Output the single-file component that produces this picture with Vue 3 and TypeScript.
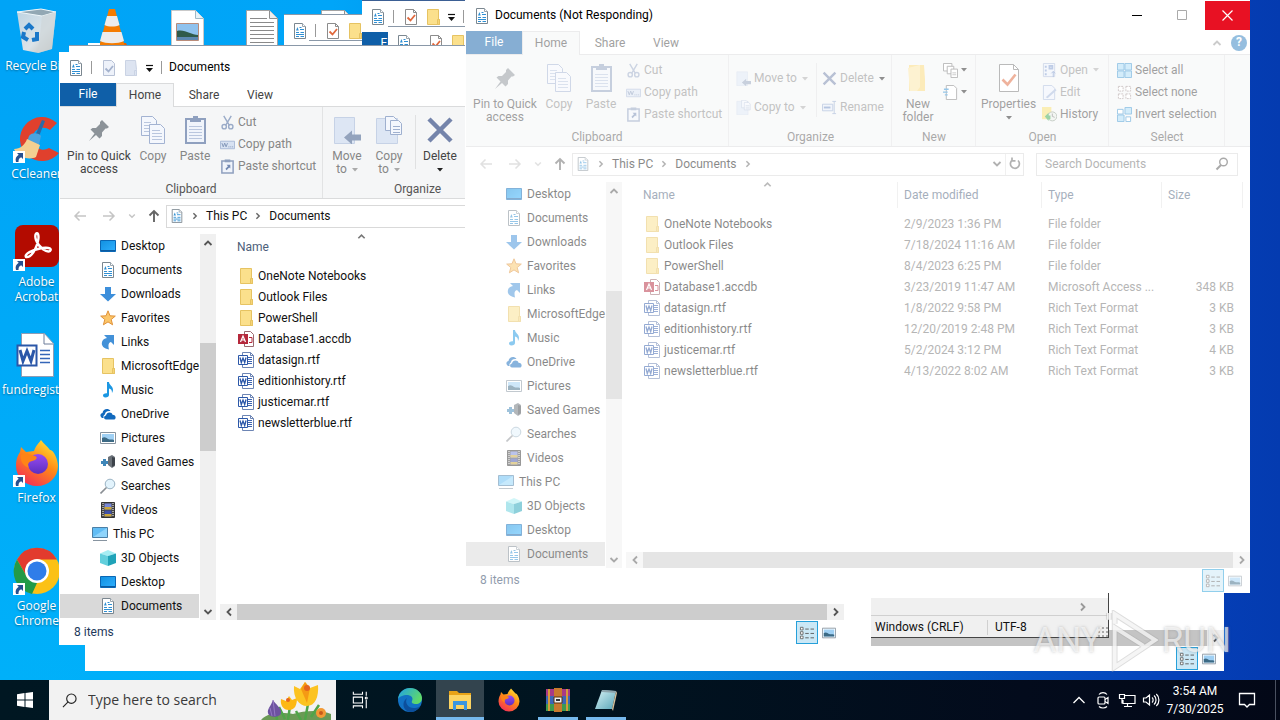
<script setup lang="ts">
interface TreeItem { label: string; icon: string; root?: boolean; selected?: boolean }
interface FileItem { name: string; icon: string; date: string; type: string; size: string }
interface ExplorerWindow { id: string; frozen: boolean }

const windows: ExplorerWindow[] = [
  { id: 'active', frozen: false },
  { id: 'frozen', frozen: true },
]

const backWindows: string[] = ['one', 'stub', 'two', 'three', 'blank']

const tree: TreeItem[] = [
  { label: 'Desktop', icon: 'desktop' },
  { label: 'Documents', icon: 'doc' },
  { label: 'Downloads', icon: 'down' },
  { label: 'Favorites', icon: 'star' },
  { label: 'Links', icon: 'link' },
  { label: 'MicrosoftEdge', icon: 'folder' },
  { label: 'Music', icon: 'music' },
  { label: 'OneDrive', icon: 'cloud' },
  { label: 'Pictures', icon: 'picture' },
  { label: 'Saved Games', icon: 'games' },
  { label: 'Searches', icon: 'lens' },
  { label: 'Videos', icon: 'video' },
  { label: 'This PC', icon: 'pc', root: true },
  { label: '3D Objects', icon: 'cube' },
  { label: 'Desktop', icon: 'desktop' },
  { label: 'Documents', icon: 'doc', selected: true },
]

const files: FileItem[] = [
  { name: 'OneNote Notebooks', icon: 'folder', date: '2/9/2023 1:36 PM', type: 'File folder', size: '' },
  { name: 'Outlook Files', icon: 'folder', date: '7/18/2024 11:16 AM', type: 'File folder', size: '' },
  { name: 'PowerShell', icon: 'folder', date: '8/4/2023 6:25 PM', type: 'File folder', size: '' },
  { name: 'Database1.accdb', icon: 'access', date: '3/23/2019 11:47 AM', type: 'Microsoft Access ...', size: '348 KB' },
  { name: 'datasign.rtf', icon: 'rtf', date: '1/8/2022 9:58 PM', type: 'Rich Text Format', size: '3 KB' },
  { name: 'editionhistory.rtf', icon: 'rtf', date: '12/20/2019 2:48 PM', type: 'Rich Text Format', size: '3 KB' },
  { name: 'justicemar.rtf', icon: 'rtf', date: '5/2/2024 3:12 PM', type: 'Rich Text Format', size: '4 KB' },
  { name: 'newsletterblue.rtf', icon: 'rtf', date: '4/13/2022 8:02 AM', type: 'Rich Text Format', size: '3 KB' },
]

const shortcuts = [
  { label: 'Recycle Bin', icon: 'bin', arrow: false },
  { label: 'CCleaner', icon: 'ccleaner', arrow: true },
  { label: 'Adobe Acrobat', icon: 'acrobat', arrow: true },
  { label: 'fundregister', icon: 'word', arrow: false },
  { label: 'Firefox', icon: 'firefox', arrow: true },
  { label: 'Google Chrome', icon: 'chrome', arrow: true },
]

const topRow = [
  { icon: 'vlc', label: 'VLC', arrow: true },
  { icon: 'imagefile', label: 'Image', arrow: false },
  { icon: 'textfile', label: 'Text', arrow: false },
  { icon: 'textfile', label: 'Text', arrow: false },
]

const tasks = [
  { icon: 'taskview', label: 'Task View', state: '' },
  { icon: 'edge', label: 'Microsoft Edge', state: '' },
  { icon: 'explorer', label: 'File Explorer', state: 'current' },
  { icon: 'firefox', label: 'Firefox', state: '' },
  { icon: 'winrar', label: 'WinRAR', state: 'running' },
  { icon: 'notepad', label: 'Notepad', state: 'running' },
]
</script>

<template>
  <div class="desktop">
    <svg class="defs" aria-hidden="true">
      <defs>
        <linearGradient id="g-fx" x1="0.8" y1="0" x2="0.2" y2="1"><stop offset="0" stop-color="#ffe437" /><stop offset=".45" stop-color="#ff8a16" /><stop offset="1" stop-color="#f2295b" /></linearGradient>
        <linearGradient id="g-fp" x1="0" y1="0" x2="0" y2="1"><stop offset="0" stop-color="#9a4bf2" /><stop offset="1" stop-color="#5b2fc0" /></linearGradient>
        <linearGradient id="g-desk" x1="0" y1="0" x2="1" y2="1"><stop offset="0" stop-color="#1190e0" /><stop offset="1" stop-color="#2fb0ff" /></linearGradient>
        <linearGradient id="g-edge" x1="0" y1="0" x2="1" y2="0.5"><stop offset="0" stop-color="#1fa2e8" /><stop offset="1" stop-color="#5fd96a" /></linearGradient>
        <linearGradient id="g-bin" x1="0" y1="0" x2="1" y2="1"><stop offset="0" stop-color="#bcd3e2" /><stop offset=".6" stop-color="#dbe3e8" /><stop offset="1" stop-color="#b7b4ae" /></linearGradient>
        <linearGradient id="g-note" x1="0" y1="0" x2="1" y2="1"><stop offset="0" stop-color="#d8f3f6" /><stop offset="1" stop-color="#5aa6b8" /></linearGradient>
      </defs>
      <symbol id="i-doc" viewBox="0 0 16 16"><path d="M2.500.5h8l3 3v12h-11z" fill="#fff" stroke="#7b8790" /><path d="M10.500.5v3h3" fill="#fff" stroke="#9aa5ad" /><path d="M7.500 4.500h2M8 6.500h4M4 9.500h3M8.500 9.500h3.500M4 11.500h8M4 13.500h3M8.500 13.500h3.500" stroke="#2f8fd3" /><path d="M4 7.500l1.500-3.500 1.200 3.500z" fill="#2f8fd3" /></symbol>
      <symbol id="i-check" viewBox="0 0 16 16"><path d="M2.500.5h8l3 3v12h-11z" fill="#fff" stroke="#8c8c8c" /><path d="M10.500.5v3h3" fill="none" stroke="#8c8c8c" /><path d="M4.500 8.500l3 3 4.500-5.500" fill="none" stroke="#e0683c" stroke-width="1.800" /></symbol>
      <symbol id="i-checkoff" viewBox="0 0 16 16"><path d="M2.500.5h8l3 3v12h-11z" fill="#eef2fa" stroke="#b8c2d6" /><path d="M4.500 8.500l3 3 4.500-5.500" fill="none" stroke="#a4b2cd" stroke-width="1.800" /></symbol>
      <symbol id="i-folder" viewBox="0 0 16 16"><path d="M2.500.5h11v10h1v5h-12z" fill="#fbe08c" stroke="#e6c362" /><path d="M12.500 10.500h2v5h-2z" fill="#f6d477" stroke="#e6c362" /></symbol>
      <symbol id="i-folderoff" viewBox="0 0 16 16"><path d="M2.500.5h10l1 9v6h-11z" fill="#dde4f1" stroke="#cad3e4" /><path d="M11.500 10.500h2v5h-2z" fill="#dde4f1" stroke="#cad3e4" /></symbol>
      <symbol id="i-desktop" viewBox="0 0 16 16"><path d="M.5 2.500h15v11H.5z" fill="url(#g-desk)" stroke="#0a67b5" /><path d="M1 12h14v1H1z" fill="#0d5a9e" /></symbol>
      <symbol id="i-down" viewBox="0 0 16 16"><path d="M5 1h6v7h5l-8 7.500L0 8h5z" fill="#3d8fdb" /></symbol>
      <symbol id="i-star" viewBox="0 0 16 16"><path d="M8 .8l2 5 5.300.3-4.100 3.400 1.400 5.300L8 11.900l-4.600 2.900 1.400-5.300L.7 6.100 6 5.800z" fill="#fbc66a" stroke="#e0923a" /></symbol>
      <symbol id="i-link" viewBox="0 0 16 16"><path d="M4 1h10v10l-3-3C8.500 8.500 8 11 9 15.500 4 14.500 1 12 2 8c.5-2.500 2.500-3.500 5-4z" fill="#4391d8" /></symbol>
      <symbol id="i-music" viewBox="0 0 16 16"><path d="M7 0h2c0 3 4 4 4 8 0 1-.5 2-1 3 0-3-1-4-3-4.500V13c0 1.500-1.500 2.500-3.500 2.500S3 14.500 3 13.300 4.500 11 7 11.200z" fill="#1c97e2" /></symbol>
      <symbol id="i-cloud" viewBox="0 0 16 16"><path d="M1 11c-1.500-2 0-4 1.500-4C3 3 8 1.500 10.500 5 7 4.500 5 6 5 8.500 3.500 9 3 11 3.800 12H2z" fill="#1269bd" /><path d="M6 13.500c-2.500 0-2.500-4 0-4 .5-4 6-4 6.500-.7 4 0 4 4.700 1 4.700z" fill="#1269bd" /></symbol>
      <symbol id="i-picture" viewBox="0 0 16 16"><path d="M.5 2.500h15v11H.5z" fill="#fff" stroke="#8794a0" /><path d="M2 4h12v8H2z" fill="#9fd0f4" /><path d="M2 8c3-1.500 4 0 6 1s4 0 6 1v2H2z" fill="#3c6a85" /></symbol>
      <symbol id="i-games" viewBox="0 0 16 16"><path d="M8 3l4-2 3 2v9l-3 2-4-3z" fill="#6a7178" /><path d="M12 3l3 1v7l-3 2z" fill="#3d434a" /><path d="M3 5h3v2h2v3H6v2H3v-2H1V7h2z" fill="#3f86b8" /></symbol>
      <symbol id="i-lens" viewBox="0 0 16 16"><circle cx="10" cy="6" r="4.800" fill="#e2f3fc" stroke="#9ab3c4" /><path d="M6.500 9.500l-6 6" stroke="#8a8f94" stroke-width="1.600" /></symbol>
      <symbol id="i-video" viewBox="0 0 16 16"><path d="M1.500.5h13v15h-13z" fill="#444" stroke="#333" /><path d="M4.500 1.500h7v6h-7z" fill="#7888d8" /><path d="M4.500 8.500h7v6h-7z" fill="#3f50a8" /><path d="M4.500 5h7v2.500h-7zM4.500 12h7v2.500h-7z" fill="#c9a638" /><path d="M3 1v14M13 1v14" stroke="#fff" stroke-dasharray="1 1" /></symbol>
      <symbol id="i-pc" viewBox="0 0 16 16"><path d="M.5 1.500h15v10H.5z" fill="#62bdf5" stroke="#4b7fa6" /><path d="M1 11l14-9v9z" fill="#8fd4fb" /><path d="M1 14.500h14" stroke="#8794a0" /></symbol>
      <symbol id="i-cube" viewBox="0 0 16 16"><path d="M0 3.500L8 0l8 3.500L8 6z" fill="#a5eef3" /><path d="M0 3.500L8 6v10l-8-3z" fill="#62cfdc" /><path d="M16 3.500L8 6v10l8-3z" fill="#1fa3b8" /></symbol>
      <symbol id="i-rtf" viewBox="0 0 16 16"><path d="M4.500.5h8l3 3v12h-11z" fill="#fff" stroke="#6d85b4" /><path d="M12.500.5v3h3" fill="none" stroke="#6d85b4" /><path d="M10 5.500h4M10 7.500h4M10 9.500h4M10 11.500h4" stroke="#3c63b0" /><path d="M.5 3.500h9v9h-9z" fill="#fff" stroke="#2b57a8" /><path d="M2 5.500l1.300 5L5 6l1.700 4.500L8 5.500" fill="none" stroke="#2b57a8" stroke-width="1.300" /></symbol>
      <symbol id="i-access" viewBox="0 0 16 16"><path d="M6.500.5h6l3 3v12h-9z" fill="#fff" stroke="#9a6a70" /><path d="M0 3h10v10H0z" fill="#b5283b" /><path d="M2.500 11L5 5l2.500 6M3.500 9h3" fill="none" stroke="#fff" stroke-width="1.200" /><path d="M11 6.500h3v5h-3" fill="none" stroke="#b5283b" /></symbol>
      <symbol id="i-pin" viewBox="0 0 24 24"><path d="M15 2l7 7-2 1.500-1.500 0-3.500 4 0 3.500L12.500 20.500 9 17l-7 6 5.500-7.500L3.500 11.500 5.500 10l3.500 0L13 6l0-2z" fill="#8c9399" /></symbol>
      <symbol id="i-copy" viewBox="0 0 28 28"><g stroke="#a3b3d2" fill="#f4f7fd"><path d="M2.500.5h11l4 4v15h-15z" /><path d="M10.500 8.500h11l4 4v15h-15z" /></g><path d="M5 6.500h7M5 9.500h5M5 12.500h5M5 15.500h5M13 14.500h8M13 17.500h10M13 20.500h10M13 23.500h10" stroke="#b9c6de" /></symbol>
      <symbol id="i-paste" viewBox="0 0 28 28"><path d="M5 3h19v24H5z" fill="#f0f4fb" stroke="#8fa0bf" stroke-width="2" /><path d="M12 0h5v2h3v4H9V2h3z" fill="#8fa0bf" /><path d="M8 10.500h13M8 13.500h13M8 16.500h13M8 19.500h13M8 22.500h13" stroke="#b9c6de" /></symbol>
      <symbol id="i-cut" viewBox="0 0 16 16"><g fill="none" stroke="#9aabc8" stroke-width="1.500"><path d="M4 1l6 10M12 1L6 11" /><circle cx="4.500" cy="12.500" r="2.300" /><circle cx="11.500" cy="12.500" r="2.300" /></g></symbol>
      <symbol id="i-path" viewBox="0 0 16 16"><path d="M.5 4.500h15v8H.5z" fill="#d8e2f2" stroke="#a9b9d6" /><path d="M2 6.500l1.500 4 1.500-4 1.500 4 1.500-4M9 10.500h1M11 10.500h1M13 10.500h1" fill="none" stroke="#8195b8" /></symbol>
      <symbol id="i-pshort" viewBox="0 0 16 16"><path d="M2 2h12v13H2z" fill="#f0f4fb" stroke="#8fa0bf" stroke-width="1.600" /><path d="M5 .5h6v3H5z" fill="#8fa0bf" /><path d="M7 6h4v4L9.800 9 7 12 5.800 10.500 8.500 7.800z" fill="#7389b3" /></symbol>
      <symbol id="i-move" viewBox="0 0 28 28"><path d="M1.500 1.500h20v26h-20z" fill="#dde6f4" stroke="#c6d2e6" /><path d="M11 21.500l8-7v4h9v6h-9v4z" fill="#93a3bd" /></symbol>
      <symbol id="i-copyto" viewBox="0 0 28 28"><path d="M1.500 2.500h21v25h-21z" fill="#dde6f4" stroke="#c6d2e6" /><g fill="#f4f7fd" stroke="#9fb0cf"><path d="M10.500.5h8l3 3v11h-11z" /><path d="M15.500 4.500h8l3 3v11h-11z" /></g><path d="M18 10.500h7M18 13.500h7M18 16.500h7" stroke="#9fb0cf" /></symbol>
      <symbol id="i-x" viewBox="0 0 28 28"><path d="M3 3l22 22M25 3L3 25" stroke="#7484ab" stroke-width="4.500" /></symbol>
      <symbol id="i-rename" viewBox="0 0 16 16"><path d="M.5 4.500h11v7H.5zM13 1.500v13M11 1.500h4M11 14.500h4" fill="#e6edf8" stroke="#8fa5cd" /><path d="M2 8h7" stroke="#6d8cc4" stroke-width="2" /></symbol>
      <symbol id="i-newfolder" viewBox="0 0 28 28"><path d="M5 1h15l1 14v12H5z" fill="#fbd978" /><path d="M4 4l12-3v22l-3 4H6z" fill="#fde7a4" /></symbol>
      <symbol id="i-newitem" viewBox="0 0 16 16"><g fill="#fff" stroke="#777"><path d="M.5.5h9v8h-9z" /><path d="M4.500 3.500h7v8h-7z" /><path d="M8.500 6.500h7v9h-7z" /></g><path d="M10 10.500h4M10 12.500h4" stroke="#999" /></symbol>
      <symbol id="i-easy" viewBox="0 0 16 16"><path d="M3.500.5h8l3 3v12h-11z" fill="#fff" stroke="#777" /><path d="M1 4.500h5M0 7.500h5M2 10.500h3" stroke="#2f8fd3" stroke-width="1.400" /></symbol>
      <symbol id="i-props" viewBox="0 0 28 28"><path d="M4.500.5h14l5 5v22h-19z" fill="#fff" stroke="#777" /><path d="M18.500.5v5h5" fill="none" stroke="#777" /><path d="M7.500 15.500l5 5 8-10" fill="none" stroke="#e0683c" stroke-width="2.600" /></symbol>
      <symbol id="i-open" viewBox="0 0 16 16"><path d="M1.500.5h12v14h-12z" fill="#eaf0fa" stroke="#a9b9d6" /><path d="M4 3v2M4 7v2M4 11v2M8 3h3v3H8z" stroke="#7f9ace" stroke-width="2" fill="none" /><path d="M12 15V9M10 11l2-2 2 2" stroke="#6d8cc4" fill="none" /></symbol>
      <symbol id="i-edit" viewBox="0 0 16 16"><path d="M1.500.5h9l3 3v12h-12z" fill="#eef3fc" stroke="#a3b6da" /><path d="M4 13l10-9 1.500 1.500L6 14z" fill="#a3b6da" /></symbol>
      <symbol id="i-history" viewBox="0 0 16 16"><path d="M0 0h10v13H0z" fill="#f6df6e" /><circle cx="11" cy="10" r="4.800" fill="#e8efe8" stroke="#8b9a8b" /><path d="M11 7v3l2.500 1" fill="none" stroke="#777" /><path d="M3 10l4-4v3h2v4H7v2z" fill="#3aa94d" /></symbol>
      <symbol id="i-selall" viewBox="0 0 16 16"><path d="M.5.5h7v7h-7zM8.500.5h7v7h-7zM.5 8.500h7v7h-7zM8.500 8.500h7v7h-7z" fill="#a9daf7" stroke="#3a92cf" /></symbol>
      <symbol id="i-selnone" viewBox="0 0 16 16"><path d="M1.500 1.500h5v5h-5zM9.500 1.500h5v5h-5zM1.500 9.500h5v5h-5zM9.500 9.500h5v5h-5z" fill="#fff" stroke="#a09090" stroke-dasharray="2 1" /></symbol>
      <symbol id="i-selinv" viewBox="0 0 16 16"><path d="M.5 2.500h6v5h-6zM9.500 10.500h5v5h-5z" fill="#fff" stroke="#3a92cf" /><path d="M8.500.5h7v7h-7zM.5 8.500h7v7h-7z" fill="#a9daf7" stroke="#3a92cf" /></symbol>
      <symbol id="i-tri" viewBox="0 0 6 6"><path d="M0 1h6L3 4.500z" fill="currentColor" /></symbol>
      <symbol id="i-custom" viewBox="0 0 10 10"><path d="M1 2.500h7" stroke="#111" stroke-width="1.200" /><path d="M1 5h7L4.500 9z" fill="#111" /></symbol>
      <symbol id="i-up" viewBox="0 0 10 10"><path d="M1.500 7L5 3.500 8.500 7" fill="none" stroke="currentColor" stroke-width="1.800" /></symbol>
      <symbol id="i-dn" viewBox="0 0 10 10"><path d="M1.500 3L5 6.500 8.500 3" fill="none" stroke="currentColor" stroke-width="1.800" /></symbol>
      <symbol id="i-lt" viewBox="0 0 10 10"><path d="M7 1.500L3.500 5 7 8.500" fill="none" stroke="currentColor" stroke-width="1.800" /></symbol>
      <symbol id="i-gt" viewBox="0 0 10 10"><path d="M3 1.500L6.500 5 3 8.500" fill="none" stroke="currentColor" stroke-width="1.800" /></symbol>
      <symbol id="i-back" viewBox="0 0 14 14"><path d="M13 7H2M6.500 2.500L2 7l4.500 4.500" fill="none" stroke="currentColor" stroke-width="1.500" /></symbol>
      <symbol id="i-fwd" viewBox="0 0 14 14"><path d="M1 7h11M7.500 2.500L12 7l-4.500 4.500" fill="none" stroke="currentColor" stroke-width="1.500" /></symbol>
      <symbol id="i-upar" viewBox="0 0 14 14"><path d="M7 13V2M2.500 6.500L7 2l4.500 4.500" fill="none" stroke="currentColor" stroke-width="1.900" /></symbol>
      <symbol id="i-refresh" viewBox="0 0 14 14"><path d="M10 3.500A4.500 4.500 0 1 1 4.500 3M4 .5v3.300h3.500" fill="none" stroke="#666" stroke-width="1.700" /></symbol>
      <symbol id="i-find" viewBox="0 0 14 14"><circle cx="8.500" cy="5" r="3.800" fill="none" stroke="#555" stroke-width="1.400" /><path d="M6 8l-4.500 4.500" stroke="#555" stroke-width="1.900" /></symbol>
      <symbol id="i-details" viewBox="0 0 18 16"><path d="M1.500 1.500h3v3h-3zM1.500 6.500h3v3h-3zM1.500 11.500h3v3h-3z" fill="#fff" stroke="#666" /><path d="M7 3.500h4M13 3.500h4M7 8.500h4M13 8.500h4M7 13.500h4M13 13.500h4" stroke="#555" /></symbol>
      <symbol id="i-short" viewBox="0 0 12 12"><path d="M0 0h12v12H0z" fill="#fff" /><path d="M4 2h6v6L8.200 6.300C6 7 5.500 8.500 5.500 11H3C2 8 3 5.500 5.700 3.800z" fill="#27508f" /></symbol>

      <symbol id="i-bin" viewBox="0 0 48 48"><path d="M4 5l24-3 15 3-4 37-14 4-15-3z" fill="url(#g-bin)" /><path d="M4 5l25 4 14-4-15-3z" fill="#93a8b4" stroke="#eef6fa" /><path d="M29 9l14-4-4 37-14 4z" fill="#cfd5d8" opacity=".7" /><g fill="none" stroke="#1b78c9" stroke-width="4"><path d="M12 22l4-4 4 4M24 25l0 7-5 1M15 33l-5-3 1-5" /></g></symbol>
      <symbol id="i-vlc" viewBox="0 0 48 48"><path d="M10 36h28l5 11H5z" fill="#e85f00" /><path d="M21 2h6l10 38c-6 4-20 4-26 0z" fill="#f57c00" /><path d="M19 9h10l2.500 9c-4 2-11 2-15 0zM14.500 25h19l2.500 9c-6 3-18 3-24 0z" fill="#ececec" /></symbol>
      <symbol id="i-imagefile" viewBox="0 0 48 48"><path d="M8.500 3.500h24l8 8v36h-32z" fill="#fff" stroke="#c9c9c9" /><path d="M32.500 3.500v8h8" fill="#e6f2f8" stroke="#9fb8c5" /><path d="M13.500 16.500h22v17h-22z" fill="#8fc2ee" stroke="#b98c7a" /><path d="M14 24c8-2 14 4 21 4v5H14z" fill="#2f5a4a" /><path d="M14 30h21v3H14z" fill="#5b87b0" /></symbol>
      <symbol id="i-textfile" viewBox="0 0 48 48"><path d="M8.500 3.500h23l8 8v40h-31z" fill="#fff" stroke="#a3a3a3" /><path d="M31.500 3.500v8h8" fill="#eee" stroke="#8f8f8f" /><path d="M12 11.500h17M12 15.500h24M12 19.500h24M12 23.500h24M12 27.500h24M12 31.500h24M12 35.500h24M12 39.500h24M12 43.500h24" stroke="#8a8a8a" /></symbol>
      <symbol id="i-ccleaner" viewBox="0 0 48 48"><path d="M44 8A22 22 0 1 0 46 38L36 33A11 11 0 1 1 37 15z" fill="#e0402d" /><path d="M29 5l3 1-7 18-4-1z" fill="#2a6aa8" /><path d="M16 21c3-4 10-3 12 0l-2 9-12-3z" fill="#4aa3e0" /><path d="M14 24l13 6-4 12c-8 4-19-1-22-8 6 0 11-4 13-10z" fill="#f3cf92" /></symbol>
      <symbol id="i-acrobat" viewBox="0 0 48 48"><rect x="2" y="2" width="44" height="42" rx="8" fill="#b30b00" /><path d="M13 34c-2-3 6-7 16-9 8-1 10 1 8 3-3 2-11-3-14-11-2-6 1-8 2-6 2 5-4 24-12 23z" fill="none" stroke="#fff" stroke-width="2.400" /></symbol>
      <symbol id="i-word" viewBox="0 0 48 48"><path d="M8.500 2.500h23l9 10v33h-32z" fill="#fff" stroke="#8d9cb5" /><path d="M31 3v10h9" fill="none" stroke="#6d7d9a" /><path d="M27 19.500h10M27 23.500h10M27 27.500h10M27 31.500h10" stroke="#3466b8" stroke-width="1.500" /><path d="M4.500 14.500h19v20h-19z" fill="#fff" stroke="#2b57a8" stroke-width="2" /><path d="M7 19l3 11 4-10 4 10 3-11" fill="none" stroke="#2b57a8" stroke-width="3" /></symbol>
      <symbol id="i-firefox" viewBox="0 0 48 48"><path d="M28 1c3 4 6 6 9 10 3-1 8 9 8 16a21 20 0 0 1-42 0C3 20 5 16 7 13l1-5 5 5 8-1c2-6 5-8 7-11z" fill="url(#g-fx)" /><circle cx="25" cy="25" r="10" fill="url(#g-fp)" /><path d="M8 16c5-3 10 0 14 1 3 1 2 4-3 5-4 1-5 4-3 7-6-2-9-7-8-13z" fill="#ff8416" /></symbol>
      <symbol id="i-chrome" viewBox="0 0 48 48"><circle cx="24" cy="24" r="23" fill="#fbc116" /><path d="M4 12.500A23 23 0 0 1 44 12.500H24L14 30z" fill="#e23b2e" /><path d="M4 12.500L14 30l10 6-5 11A23 23 0 0 1 4 12.500z" fill="#239a48" /><circle cx="24" cy="24" r="12" fill="#fff" /><circle cx="24" cy="24" r="9.500" fill="#2f7de9" /></symbol>

      <symbol id="i-taskview" viewBox="0 0 24 24"><g fill="none" stroke="#fff" stroke-width="1.300"><path d="M4 2v3h11V2M4 22v-3h11v3M4 8.500h11v7H4zM19.500 2v5M19.500 12v10" /><circle cx="19.500" cy="9.500" r="1.200" /></g></symbol>
      <symbol id="i-edge" viewBox="0 0 24 24"><circle cx="12" cy="12" r="12" fill="#1272c4" /><path d="M0 11C1 4 6 0 12 0c7 0 12 5 12 10 0 4-3 6-6 6-3 0-5-1-4-3 2-4-2-6-5-6-4 0-8 2-9 4z" fill="url(#g-edge)" /><path d="M9 10c-3 5 2 11 8 10 2 0 4-1 5-2-2 4-6 6-10 6-7-1-9-10-3-14z" fill="#0c4f9c" /></symbol>
      <symbol id="i-explorer" viewBox="0 0 24 24"><path d="M1 3h8l2 2h12v5H1z" fill="#e8a317" /><path d="M1 7h22v14H1z" fill="#fcd462" /><path d="M5 13h14v9h-3v-5H8v5H5z" fill="#3a96e0" /></symbol>
      <symbol id="i-winrar" viewBox="0 0 24 24"><path d="M0 1h24v7H0z" fill="#a83a86" /><path d="M0 8h24v8H0z" fill="#3b66b8" /><path d="M0 16h24v7H0z" fill="#3f9a4e" /><path d="M3 1v22M21 1v22" stroke="#d69a3c" stroke-width="2" /><path d="M8 0h8v24H8z" fill="#c9792e" /><path d="M8 9h8v6H8z" fill="#eee" stroke="#5a3210" /><path d="M10 12h4" stroke="#333" stroke-width="2" /></symbol>
      <symbol id="i-notepad" viewBox="0 0 24 24"><path d="M8 2l14 1-4 18H1z" fill="url(#g-note)" /><path d="M22 3l1 2-4 18-1-2z" fill="#d7c19b" /><path d="M8 2l14 1v2L8 4z" fill="#8fa5ad" /></symbol>
    </svg>

    <div class="shortcuts">
      <div class="column">
        <button v-for="s in shortcuts" :key="s.label" class="shortcut">
          <span class="pic"><svg class="s48"><use :href="`#i-${s.icon}`" /></svg><svg v-if="s.arrow" class="arrow"><use href="#i-short" /></svg></span>
          <span class="name">{{ s.label }}</span>
        </button>
      </div>
      <button v-for="(s, i) in topRow" :key="i" class="shortcut" :aria-label="s.label">
        <span class="pic"><svg class="s48"><use :href="`#i-${s.icon}`" /></svg><svg v-if="s.arrow" class="arrow"><use href="#i-short" /></svg></span>
      </button>
    </div>

    <section v-for="b in backWindows" :key="b" class="back" :class="`back-${b}`">
      <template v-if="b !== 'blank' && b !== 'stub'">
        <div class="quick">
          <svg class="s16"><use href="#i-doc" /></svg><i class="sep" /><svg class="s16 q-check"><use href="#i-check" /></svg><svg class="s16 q-folder"><use href="#i-folder" /></svg><svg class="q-arrow"><use href="#i-custom" /></svg><i class="sep" />
        </div>
        <button class="tab file">{{ b === 'two' ? 'File' : '' }}</button>
      </template>
    </section>

    <section class="lower">
      <div class="hscroll dark"><span class="thumb" /><button aria-label="Scroll right"><svg class="s10"><use href="#i-gt" /></svg></button></div>
      <div class="status"><span /><button class="view on" aria-label="Details"><svg><use href="#i-details" /></svg></button><button class="view" aria-label="Large icons"><svg class="thumbs"><use href="#i-picture" /></svg></button></div>
    </section>

    <section class="notepad">
      <div class="np-scroll"><span class="s10 np-arrow"><svg class="s10"><use href="#i-gt" /></svg></span></div>
      <div class="np-status"><span class="np-eol">Windows (CRLF)</span><span>UTF-8</span><i class="grip" /></div>
    </section>

    <section v-for="w in windows" :key="w.id" class="window" :class="[w.id]">
      <header class="title">
        <div v-if="!w.frozen" class="quick">
          <svg class="s16"><use href="#i-doc" /></svg><i class="sep" /><svg class="s16 q-check"><use href="#i-checkoff" /></svg><svg class="s16 q-folder"><use href="#i-folderoff" /></svg><svg class="q-arrow"><use href="#i-custom" /></svg><i class="sep" />
          <span class="caption">Documents</span>
        </div>
        <template v-else>
          <svg class="s16 app"><use href="#i-doc" /></svg>
          <span class="caption grow">Documents (Not Responding)</span>
          <button class="ctl" aria-label="Minimize"><svg viewBox="0 0 11 11"><path d="M0 5.500h10" stroke="#000" /></svg></button>
          <button class="ctl" aria-label="Maximize"><svg viewBox="0 0 11 11"><path d="M.5.5h9v9h-9z" fill="none" stroke="#aaa" /></svg></button>
          <button class="ctl close" aria-label="Close"><svg viewBox="0 0 11 11"><path d="M.5.5l10 10M10.500.5l-10 10" stroke="#fff" stroke-width="1.200" /></svg></button>
        </template>
      </header>

      <div class="content" :class="{ faded: w.frozen }">
        <nav class="tabs">
          <button class="tab file">File</button>
          <button class="tab home">Home</button>
          <button class="tab">Share</button>
          <button class="tab view-tab">View</button>
          <span v-if="w.frozen" class="help"><svg class="s10"><use href="#i-up" /></svg><button aria-label="Help">?</button></span>
        </nav>

        <div class="ribbon">
          <div class="group clipboard">
            <div class="tools">
              <button class="big wide"><svg class="s24"><use href="#i-pin" /></svg><span>Pin to Quick<br>access</span></button>
              <button class="big off"><svg class="s28"><use href="#i-copy" /></svg>Copy</button>
              <button class="big off"><svg class="s28"><use href="#i-paste" /></svg>Paste</button>
              <div class="stack first">
                <button class="small off"><svg><use href="#i-cut" /></svg>Cut</button>
                <button class="small off"><svg><use href="#i-path" /></svg>Copy path</button>
                <button class="small off"><svg><use href="#i-pshort" /></svg>Paste shortcut</button>
              </div>
            </div>
            <h2>Clipboard</h2>
          </div>

          <template v-if="!w.frozen">
            <div class="group organize-large">
              <div class="tools">
                <button class="big off"><svg class="s28"><use href="#i-move" /></svg>Move<span class="line">to <svg class="tri"><use href="#i-tri" /></svg></span></button>
                <button class="big off"><svg class="s28"><use href="#i-copyto" /></svg>Copy<span class="line">to <svg class="tri"><use href="#i-tri" /></svg></span></button>
                <i class="rule" />
                <button class="big del"><svg class="s28"><use href="#i-x" /></svg>Delete<svg class="tri below"><use href="#i-tri" /></svg></button>
              </div>
              <h2>Organize</h2>
            </div>
          </template>

          <template v-else>
            <div class="group organize">
              <div class="tools">
                <div class="stack pair">
                  <button class="small off"><svg><use href="#i-move" /></svg>Move to<svg class="tri"><use href="#i-tri" /></svg></button>
                  <button class="small off"><svg><use href="#i-copyto" /></svg>Copy to<svg class="tri"><use href="#i-tri" /></svg></button>
                </div>
                <i class="rule" />
                <div class="stack pair">
                  <button class="small off dark-tri"><svg><use href="#i-x" /></svg>Delete<svg class="tri"><use href="#i-tri" /></svg></button>
                  <button class="small off"><svg><use href="#i-rename" /></svg>Rename</button>
                </div>
              </div>
              <h2>Organize</h2>
            </div>
            <div class="group new">
              <div class="tools">
                <button class="big"><svg class="s28"><use href="#i-newfolder" /></svg><span>New<br>folder</span></button>
                <div class="stack">
                  <button class="small tight" aria-label="New item"><svg><use href="#i-newitem" /></svg><svg class="tri"><use href="#i-tri" /></svg></button>
                  <button class="small tight" aria-label="Easy access"><svg><use href="#i-easy" /></svg><svg class="tri"><use href="#i-tri" /></svg></button>
                </div>
              </div>
              <h2>New</h2>
            </div>
            <div class="group open">
              <div class="tools">
                <button class="big props"><svg class="s28"><use href="#i-props" /></svg>Properties<svg class="tri below"><use href="#i-tri" /></svg></button>
                <div class="stack">
                  <button class="small off"><svg><use href="#i-open" /></svg>Open<svg class="tri"><use href="#i-tri" /></svg></button>
                  <button class="small off"><svg><use href="#i-edit" /></svg>Edit</button>
                  <button class="small"><svg><use href="#i-history" /></svg>History</button>
                </div>
              </div>
              <h2>Open</h2>
            </div>
            <div class="group select">
              <div class="tools">
                <div class="stack">
                  <button class="small"><svg><use href="#i-selall" /></svg>Select all</button>
                  <button class="small"><svg><use href="#i-selnone" /></svg>Select none</button>
                  <button class="small"><svg><use href="#i-selinv" /></svg>Invert selection</button>
                </div>
              </div>
              <h2>Select</h2>
            </div>
          </template>
        </div>

        <div class="address">
          <button class="nav dim" aria-label="Back"><svg class="s14"><use href="#i-back" /></svg></button>
          <button class="nav dim" aria-label="Forward"><svg class="s14"><use href="#i-fwd" /></svg></button>
          <button class="nav dim thin" aria-label="Recent locations"><svg class="s8"><use href="#i-dn" /></svg></button>
          <button class="nav" aria-label="Up"><svg class="s14"><use href="#i-upar" /></svg></button>
          <div class="crumbs">
            <svg class="s14"><use href="#i-doc" /></svg>
            <svg class="s8 gt"><use href="#i-gt" /></svg><button>This PC</button>
            <svg class="s8 gt"><use href="#i-gt" /></svg><button>Documents</button>
            <svg v-if="w.frozen" class="s8 gt"><use href="#i-gt" /></svg>
            <span class="grow" />
            <button class="drop" aria-label="Previous locations"><svg class="s10"><use href="#i-dn" /></svg></button>
            <button class="reload" aria-label="Refresh"><svg class="s14"><use href="#i-refresh" /></svg></button>
          </div>
          <label v-if="w.frozen" class="search"><input type="text" placeholder="Search Documents" aria-label="Search Documents"><svg class="s14"><use href="#i-find" /></svg></label>
        </div>

        <div class="panes">
          <nav class="tree">
            <button v-for="(t, i) in tree" :key="i" :class="{ root: t.root, selected: t.selected }">
              <svg class="s16"><use :href="`#i-${t.icon}`" /></svg><span>{{ t.label }}</span>
            </button>
          </nav>
          <div class="vscroll">
            <button aria-label="Scroll up"><svg class="s10"><use href="#i-up" /></svg></button>
            <span class="thumb" />
            <button class="end" aria-label="Scroll down"><svg class="s10"><use href="#i-dn" /></svg></button>
          </div>
          <div class="list">
            <table>
              <colgroup><col class="c-name"><col class="c-date"><col class="c-type"><col class="c-size"></colgroup>
              <thead><tr><th><svg class="sort"><use href="#i-up" /></svg>Name</th><template v-if="w.frozen"><th>Date modified</th><th>Type</th><th>Size</th></template></tr></thead>
              <tbody>
                <tr v-for="f in files" :key="f.name">
                  <td class="fname"><svg class="s16"><use :href="`#i-${f.icon}`" /></svg>{{ f.name }}</td><template v-if="w.frozen"><td>{{ f.date }}</td><td>{{ f.type }}</td><td class="size">{{ f.size }}</td></template>
                </tr>
              </tbody>
            </table>
            <div class="hscroll">
              <button aria-label="Scroll left"><svg class="s10"><use href="#i-lt" /></svg></button><span class="thumb" /><button aria-label="Scroll right"><svg class="s10"><use href="#i-gt" /></svg></button>
            </div>
          </div>
        </div>

        <footer class="status">
          <span class="count">8 items</span>
          <button class="view on" aria-label="Details"><svg><use href="#i-details" /></svg></button>
          <button class="view" aria-label="Large icons"><svg class="thumbs"><use href="#i-picture" /></svg></button>
        </footer>
      </div>
    </section>

    <div class="mark">
      <span>ANY</span>
      <svg viewBox="0 0 56 64"><path d="M4 3v7M10 14V4l42 27L10 59V18l30 19" fill="none" stroke="#aaa" stroke-opacity=".4" stroke-width="6" /><path d="M4 3v7M10 14V4l42 27L10 59V18l30 19" fill="none" stroke="#fff" stroke-opacity=".7" stroke-width="4" /></svg>
      <span>RUN</span>
    </div>

    <footer class="taskbar">
      <button class="start" aria-label="Start"><svg class="s16" viewBox="0 0 16 16"><path d="M0 2.200L7.500 1v6.500H0zM8.500 1L16 0v7.500H8.500zM0 8.500h7.500V15L0 13.800zM8.500 8.500H16V16l-7.500-1z" fill="#fff" /></svg></button>
      <label class="find">
        <svg class="glass" viewBox="0 0 16 16"><circle cx="10" cy="6" r="5" fill="none" stroke="#222" stroke-width="1.200" /><path d="M6.500 9.500L1 15" stroke="#222" stroke-width="1.200" /></svg>
        <input type="text" placeholder="Type here to search" aria-label="Type here to search">
        <svg class="flowers" viewBox="0 0 70 39"><path d="M0 39c8-9 24-7 32-6 12-4 30-4 38 0v6z" fill="#6a9a55" /><path d="M16 39l-1-8M27 39l2-14M44 39l3-16M35 30l5 9M58 24l-8 12M18 26l6 12" stroke="#4fa548" stroke-width="2.500" fill="none" /><path d="M12 19c2 4 9 8 8 13-1 5-12 5-13 0-1-4 3-7 5-13z" fill="#6d52a0" /><path d="M12 19l2 16M9 27l2 8" stroke="#9478c4" fill="none" /><path d="M20 18l5 2 3-5 3 4 5-2c0 7-2 12-8 12s-9-5-8-11z" fill="#fdb813" /><path d="M33 5l6 3 5-7 5 6 8-3c1 12-3 21-11 21S32 17 33 5z" fill="#fcc321" /><path d="M40 8l4-7 5 6-3 15z" fill="#f59a14" /><circle cx="46" cy="7" r="3" fill="#e5641f" /><circle cx="27" cy="19" r="2" fill="#e5641f" /><circle cx="60" cy="32" r="5" fill="#f39a35" /><circle cx="60" cy="32" r="2" fill="#c85a1a" /></svg>
      </label>
      <button v-for="t in tasks" :key="t.label" class="task" :class="[t.state, `task-${t.icon}`]" :aria-label="t.label"><svg class="s24"><use :href="`#i-${t.icon}`" /></svg></button>
      <span class="grow" />
      <div class="tray">
        <button aria-label="Show hidden icons"><svg viewBox="0 0 18 18"><path d="M3.500 12L9 6.500l5.500 5.500" fill="none" stroke="#fff" stroke-width="1.300" /></svg></button>
        <button aria-label="Meet Now"><svg viewBox="0 0 18 18"><g fill="none" stroke="#fff" stroke-width="1.200"><rect x="4" y="6" width="7" height="7" rx="1" /><path d="M11 8.500l3-2v6l-3-2M5 3.500C7 1 11 1 13 3.500M5 15.500c2 2 6 2 8 0" /></g></svg></button>
        <button aria-label="Network"><svg viewBox="0 0 18 18"><g fill="none" stroke="#fff" stroke-width="1.200"><path d="M7 4.500h10v8H5V9M9.500 12.500v3M6 15.500h8M1.500 3.500h5v4h-5zM4 7.500v5" /></g></svg></button>
        <button aria-label="Volume"><svg viewBox="0 0 18 18"><g fill="none" stroke="#fff" stroke-width="1.200"><path d="M1.500 7h2.500l3.500-3v10L4 11H1.500zM10 6.500c1.500 1 1.500 4 0 5M12 4.500c2.700 2 2.700 7 0 9M14.300 3c3.500 3 3.500 9 0 12" /></g></svg></button>
      </div>
      <div class="clock"><span>3:54 AM</span><span>7/30/2025</span></div>
      <button class="notify" aria-label="Notifications"><svg class="s18" viewBox="0 0 18 18"><path d="M1.500 2.500h15v11h-5L9 16l-2.500-2.500h-5z" fill="none" stroke="#fff" stroke-width="1.300" /></svg></button>
      <button class="peek" aria-label="Show desktop" />
    </footer>
  </div>
</template>

<style>
body { margin: 0; }
</style>

<style scoped>
.desktop { position: relative; min-height: 100vh; overflow: hidden; font: 12px/15px "Open Sans", "Noto Sans", sans-serif; color: #111; background: radial-gradient(ellipse 80% 90% at 0 100%, #00c4ff66, #00c4ff00), linear-gradient(90deg, #00a4f6 0, #00a5f8 26%, #0089e0 45%, #0461cc 72%, #0540b8 92%, #043bb0 100%); }
.desktop *, .desktop *::before { box-sizing: border-box; }
button, input { font: inherit; color: inherit; background: none; border: 0; padding: 0; margin: 0; min-width: 0; }
button { display: flex; align-items: center; justify-content: center; white-space: nowrap; }
svg { display: block; flex: none; width: 16px; height: 16px; }
.defs { position: absolute; width: 0; height: 0; }
.s8 { width: 8px; height: 8px; }
.s10 { width: 10px; height: 10px; }
.s14 { width: 14px; height: 14px; }
.s16 { width: 16px; height: 16px; }
.s18 { width: 18px; height: 18px; }
.s24 { width: 24px; height: 24px; }
.s28 { width: 28px; height: 28px; }
.s48 { width: 48px; height: 48px; }
.grow { flex: 1; }

.shortcuts { position: absolute; left: 0; top: 0; display: flex; align-items: flex-start; }
.shortcut { flex-direction: column; justify-content: flex-start; width: 75px; height: 108px; padding: 7px 2px 0 0; color: #fff; text-shadow: 0 1px 2px #0006; }
.shortcut .name { width: 64px; margin-top: 3px; white-space: normal; display: flex; justify-content: center; text-align: center; }
.pic { position: relative; }
.arrow { position: absolute; left: 0; bottom: 0; width: 12px; height: 12px; }

.back, .lower, .notepad, .window { position: absolute; background: #fff; overflow: hidden; font-family: Roboto, "Noto Sans", sans-serif; }
.back { bottom: 300px; right: 815px; border-top: 1px solid #8a98a8; }
.back-one { left: 284px; top: 14px; }
.back-stub { left: 309px; top: 40px; }
.back-two { left: 362px; top: 0; border-color: #3b5f94; }
.back-three { left: 388px; top: 26px; }
.back-blank { left: 69px; top: 45px; }
.quick { display: flex; align-items: center; height: 31px; padding-left: 8px; }
.sep { width: 1px; height: 13px; margin-left: 7px; background: #999; }
.q-check { margin-left: 9px; }
.q-folder { margin-left: 6px; }
.q-arrow { width: 10px; height: 10px; margin-left: 6px; }
.q-arrow + .sep { margin-left: 6px; }
.caption { margin-left: 7px; color: #000; }

.lower { left: 85px; right: 56px; bottom: 49px; display: flex; flex-direction: column; justify-content: flex-end; height: 400px; }
.notepad { left: 871px; top: 593px; width: 238px; border-right: 1px solid #444; border-bottom: 1px solid #444; background: #f0f0f0; }
.np-scroll { display: flex; justify-content: flex-end; align-items: center; height: 22px; border-top: 5px solid #fff; color: #999; }
.np-arrow { margin-right: 20px; }
.np-status { display: flex; align-items: center; height: 22px; border-top: 1px solid #d0d0d0; padding: 1px 0 0 4px; }
.np-eol { width: 113px; margin-right: 7px; border-right: 1px solid #d0d0d0; }
.grip { width: 10px; height: 10px; margin-left: auto; align-self: flex-end; background: radial-gradient(circle at 1px 1px, #aaa 1px, transparent 1px) 0 0 / 4px 4px; }

.window { border-left: 1px solid #fff; }
.active { left: 59px; right: 436px; top: 52px; }
.frozen { left: 465px; right: 30px; top: 0; }
.faded { opacity: .5; }
.title { display: flex; align-items: center; height: 31px; }
.app { margin-left: 8px; }
.app + .caption { margin-left: 5px; }
.ctl { width: 45px; height: 29px; }
.ctl svg { width: 11px; height: 11px; }
.close { background: #e81123; }

.tabs { display: flex; height: 24px; border-bottom: 1px solid #dadbdc; }
.tab { height: 24px; width: 60px; color: #444; }
.tab.file { width: 56px; height: 23px; background: #0f5fa8; color: #fff; }
.tab.home { width: 58px; background: #f5f6f7; border: 1px solid #dadbdc; border-bottom: 0; }
.view-tab { width: 52px; }
.help { display: flex; align-items: center; gap: 9px; margin-left: auto; margin-right: 3px; color: #999; }
.help button { width: 16px; height: 16px; border-radius: 8px; background: #2e7fc0; color: #fff; font-weight: 700; }

.ribbon { display: flex; height: 92px; background: #f5f6f7; border-bottom: 1px solid #dadbdc; overflow: hidden; }
.group { flex: none; display: flex; flex-direction: column; border-right: 1px solid #e2e3e4; margin-right: 1px; color: #444; }
.group h2 { margin: 0; height: 18px; font-size: 12px; font-weight: 400; line-height: 18px; text-align: center; color: #555; }
.tools { display: flex; height: 73px; }
.big { display: flex; flex-direction: column; justify-content: flex-start; width: 42px; padding-top: 8px; line-height: 13px; }
.big > svg:first-child { margin: 1px 0 6px; }
.big > .s24:first-child { margin: 3px 0 8px; }
.big.wide { width: 66px; margin-left: 6px; }
.line { display: flex; align-items: center; }
.off { color: #868686; }
.stack { display: flex; flex-direction: column; padding-top: 4px; }
.stack.first { margin-left: 4px; }
.small { height: 22px; justify-content: flex-start; }
.small > svg:first-child { width: 15px; height: 15px; margin-right: 3px; }
.tri { width: 6px; height: 6px; margin-left: 5px; color: #aaa; }
.small:not(.off) .tri, .dark-tri .tri, .tri.below { color: #222; }
.tri.below { margin: 4px 0 0; }
.pair { padding-top: 9px; }
.pair .small { height: 29px; }
.rule { width: 1px; height: 54px; margin: 8px 5px 0; background: #e0e1e2; }
.clipboard { width: 263px; }
.organize-large { width: 188px; }
.organize-large .tools { padding-left: 2px; }
.del { width: 38px; }
.organize { width: 162px; }
.organize .tools { padding-left: 6px; }
.pair:first-child { width: 75px; }
.new { width: 83px; }
.new .big { width: 50px; }
.tight .tri { margin-left: 0; }
.open { width: 132px; }
.props { width: 63px; }
.open .stack { margin-left: 2px; }
.select { width: 115px; }
.select .tools { padding-left: 7px; }

.address { display: flex; align-items: center; height: 35px; padding: 0 12px 1px 5px; }
.nav { width: 29px; height: 22px; color: #666; }
.nav.dim { color: #c5c5c5; }
.nav.thin { width: 18px; }
.nav:not(.dim) { width: 25px; }
.crumbs { flex: 1; display: flex; align-items: center; height: 23px; padding-left: 3px; border: 1px solid #d9d9d9; }
.crumbs .gt { margin: 0 7px; color: #666; }
.drop { width: 16px; color: #666; }
.reload { width: 18px; height: 21px; border-left: 1px solid #e3e3e3; }
.search { display: flex; align-items: center; width: 202px; height: 23px; margin-left: 12px; padding: 0 8px; border: 1px solid #d9d9d9; }
.search input { flex: 1; outline: 0; }
.search input::placeholder { color: #6d6d6d; opacity: 1; }

.panes { display: grid; grid-template-columns: 140px 16px minmax(0, 1fr); height: 386px; }
.tree { overflow: hidden; }
.tree button { width: 139px; height: 24px; padding-left: 40px; justify-content: flex-start; }
.tree button.root { padding-left: 32px; }
.tree span { margin-left: 5px; }
.tree .selected { background: #d9d9d9; }
.vscroll { display: flex; flex-direction: column; background: #f0f0f0; color: #555; }
.vscroll button { height: 17px; }
.vscroll .thumb { height: 108px; margin-top: 92px; background: #cdcdcd; }
.vscroll .end { margin-top: auto; }
.list { display: flex; flex-direction: column; justify-content: space-between; margin-left: 4px; }
table { width: 606px; margin-left: 11px; border-collapse: separate; border-spacing: 0; table-layout: fixed; }
.c-name { width: 261px; }
.c-date { width: 144px; }
.c-type { width: 120px; }
.c-size { width: 81px; }
th { position: relative; height: 26px; padding: 0 6px; text-align: left; font-weight: 400; color: #4c607a; border-right: 1px solid #e5e5e5; }
.sort { position: absolute; left: 126px; top: -2px; width: 9px; height: 9px; color: #777; }
td { height: 21px; padding: 1px 6px 0; white-space: nowrap; color: #6d6d6d; }
tbody::before { content: ""; display: block; height: 5px; }
td.fname { display: flex; align-items: center; gap: 4px; padding-left: 7px; color: #111; }
td.size { text-align: right; padding-right: 9px; }
.hscroll { display: flex; height: 16px; background: #f0f0f0; color: #555; }
.hscroll button { width: 17px; }
.hscroll .thumb { flex: 1; background: #cdcdcd; }
.hscroll.dark { margin-left: 786px; }
.hscroll.dark .thumb { background: #c4c4c4; }

.status { display: flex; align-items: center; height: 25px; padding: 0 4px 0 14px; color: #1e395b; }
.status > span { flex: 1; }
.view { width: 22px; height: 23px; }
.view svg { width: 16px; height: 14px; }
.view .thumbs { width: 14px; height: 14px; }
.view.on { background: #cbe8f6; border: 1px solid #26a0da; }

.mark { position: absolute; right: 49px; bottom: 48px; display: flex; align-items: center; gap: 3px; color: #ffffffa0; font: 35px/60px Roboto, sans-serif; text-shadow: 0 0 3px #8888; }
.mark svg { width: 54px; height: 62px; }

.taskbar { position: absolute; left: 0; right: 0; bottom: 0; display: flex; height: 40px; color: #fff; background: linear-gradient(90deg, #001722, #001420 45%, #030b1c 80%, #030817); }
.start { width: 49px; }
.find { display: flex; align-items: center; width: 287px; background: #f2f2f2; color: #333; }
.glass { width: 15px; height: 15px; margin: 0 11px 0 13px; }
.find input { flex: 1; font-size: 14px; line-height: 20px; outline: 0; }
.find input::placeholder { color: #3a3a3a; opacity: 1; }
.flowers { width: 70px; height: 39px; align-self: flex-end; margin-right: 5px; }
.task { width: 48px; border-bottom: 3px solid transparent; padding-top: 3px; }
.task.running { background: linear-gradient(#76b9ed, #76b9ed) center bottom / 40px 3px no-repeat border-box; }
.task.current { background: #33444e; border-color: #76b9ed; }
.task-edge { width: 52px; }
.task-firefox { width: 50px; }
.task-taskview svg { width: 20px; height: 20px; }
.tray { display: flex; align-items: center; }
.tray button { width: 24px; height: 40px; }
.tray svg { width: 18px; height: 18px; }
.clock { display: flex; flex-direction: column; align-items: center; justify-content: center; width: 64px; line-height: 18px; font-family: Roboto, sans-serif; }
.notify { width: 40px; }
.peek { width: 5px; margin-left: 8px; border-left: 1px solid #4a5160; }
</style>
